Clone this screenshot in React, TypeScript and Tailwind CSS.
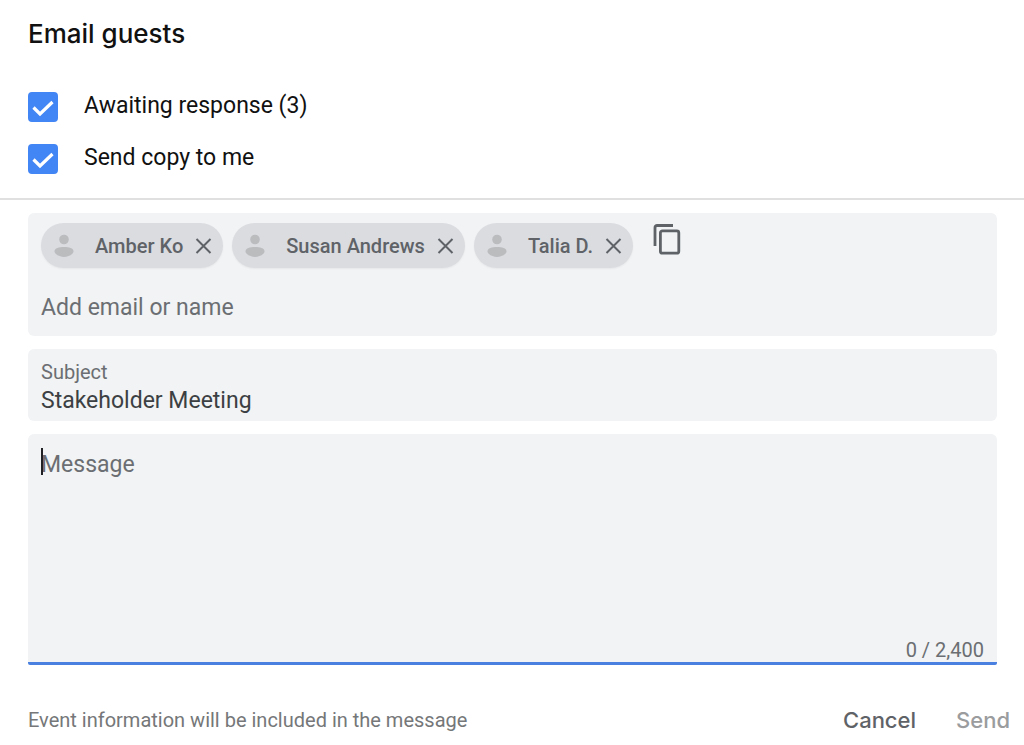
import { useState } from 'react';

const MAX_LENGTH = 2400;

interface OptionProps {
  id: string;
  label: string;
  checked: boolean;
  onChange: (checked: boolean) => void;
}

function Option({ id, label, checked, onChange }: OptionProps) {
  return (
    <div className="flex items-start gap-[26px]">
      <span className="relative h-[30px] w-[30px] shrink-0">
        <input
          id={id}
          type="checkbox"
          checked={checked}
          onChange={(e) => onChange(e.target.checked)}
          className="block h-[30px] w-[30px] cursor-pointer appearance-none rounded border-2 border-[#5f6368] checked:border-[#4285f4] checked:bg-[#4285f4]"
        />
        {checked && (
          <svg className="pointer-events-none absolute inset-0" viewBox="0 0 30 30" fill="none" aria-hidden="true">
            <path d="M5.500 15.500l6.500 6.500L24.500 10" stroke="#fff" strokeWidth="3.200" />
          </svg>
        )}
      </span>
      <label htmlFor={id} className="cursor-pointer text-[23px] leading-7 text-[#111]">
        {label}
      </label>
    </div>
  );
}

function GuestChip({ name, onRemove }: { name: string; onRemove: () => void }) {
  return (
    <li className="flex h-[45px] items-center rounded-full bg-[#dadce0] pr-2 pl-3 shadow-xs">
      <svg className="h-6 w-6" viewBox="0 0 24 24" fill="#bbbcbe" aria-hidden="true">
        <circle cx="11" cy="5.500" r="4.800" />
        <path d="M1.500 17.500C1.500 14 6 13 11 13s9.500 1 9.500 4.500c0 2.500-5 5.500-9.500 5.500s-9.500-3-9.500-5.500z" />
      </svg>
      <span className="ml-[18px] text-[20px] font-medium text-[#5f6368]">{name}</span>
      <button type="button" aria-label={`Remove ${name}`} onClick={onRemove} className="ml-2 cursor-pointer">
        <svg className="h-6 w-6" viewBox="0 0 24 24" fill="none" stroke="#5f6368" strokeWidth="2">
          <path d="M5.500 5l14 14M19.500 5l-14 14" />
        </svg>
      </button>
    </li>
  );
}

export default function App() {
  const [awaiting, setAwaiting] = useState(true);
  const [sendCopy, setSendCopy] = useState(true);
  const [guests, setGuests] = useState(['Amber Ko', 'Susan Andrews', 'Talia D.']);
  const [subject, setSubject] = useState('Stakeholder Meeting');
  const [message, setMessage] = useState('');

  const removeGuest = (name: string) => {
    setGuests(guests.filter((guest) => guest !== name));
  };

  return (
    <form className="bg-white font-['Roboto',sans-serif]" onSubmit={(e) => e.preventDefault()}>
      <header className="border-b-2 border-[#e0e0e0] px-7 pt-4 pb-6">
        <h1 className="font-['Inter',sans-serif] text-[26px] leading-9 font-medium text-[#111]">Email guests</h1>
        <div className="mt-10 flex flex-col gap-[22px]">
          <Option id="awaiting" label="Awaiting response (3)" checked={awaiting} onChange={setAwaiting} />
          <Option id="send-copy" label="Send copy to me" checked={sendCopy} onChange={setSendCopy} />
        </div>
      </header>

      <div className="flex flex-col gap-[13px] pt-[13px] pr-[27px] pl-7">
        <div className="rounded-md bg-[#f1f3f4] px-[13px] pt-[10px] pb-[11px]">
          <div className="flex items-start gap-5">
            <ul className="flex flex-wrap gap-[9px]">
              {guests.map((guest) => (
                <GuestChip key={guest} name={guest} onRemove={() => removeGuest(guest)} />
              ))}
            </ul>
            <button type="button" aria-label="Copy guest emails" className="cursor-pointer">
              <svg className="h-8 w-7" viewBox="0 0 28 32" fill="none" stroke="#5f6368" strokeWidth="2.800">
                <path d="M2 23V4.500a2 2 0 012-2H20" />
                <rect x="7.400" y="7.800" width="18.400" height="22.400" rx="2" />
              </svg>
            </button>
          </div>
          <input
            type="text"
            aria-label="Add email or name"
            placeholder="Add email or name"
            className="mt-[21px] block h-9 w-full bg-transparent text-[23px] text-[#3c4043] outline-none placeholder:text-[#6b6e72]"
          />
        </div>

        <div className="rounded-md bg-[#f1f3f4] px-[13px] pt-[10px] pb-[5px]">
          <label htmlFor="subject" className="block text-[20px] leading-[26px] text-[#6b6e72]">
            Subject
          </label>
          <input
            id="subject"
            type="text"
            value={subject}
            onChange={(e) => setSubject(e.target.value)}
            className="mt-px block h-[30px] w-full bg-transparent text-[23px] text-[#3c4043] outline-none"
          />
        </div>

        <div className="relative rounded-t-md rounded-b-xs border-b-3 border-[#4a80e0] bg-[#f1f3f4] px-[13px] pt-[15px]">
          {message === '' && <span className="absolute top-[14px] left-[13px] h-[27px] w-[2px] bg-[#202124]" />}
          <textarea
            aria-label="Message"
            placeholder="Message"
            maxLength={MAX_LENGTH}
            value={message}
            onChange={(e) => setMessage(e.target.value)}
            className="block h-[189px] w-full resize-none bg-transparent text-[23px] leading-8 text-[#3c4043] outline-none placeholder:text-[#6b6e72]"
          />
          <p className="text-right text-[20px] leading-6 text-[#6b6e72]">
            {message.length} / {MAX_LENGTH.toLocaleString('en-US')}
          </p>
        </div>
      </div>

      <footer className="flex items-center justify-between pt-[35px] pr-[14px] pl-7">
        <p className="text-[20px] leading-10 text-[#757779]">Event information will be included in the message</p>
        <div className="flex gap-10 font-['Inter',sans-serif] text-[22px] leading-10 font-medium">
          <button type="button" className="cursor-pointer text-[#5f6368]">
            Cancel
          </button>
          <button type="submit" disabled={message === ''} className="text-[#5f6368] disabled:text-[#9a9c9e]">
            Send
          </button>
        </div>
      </footer>
    </form>
  );
}
